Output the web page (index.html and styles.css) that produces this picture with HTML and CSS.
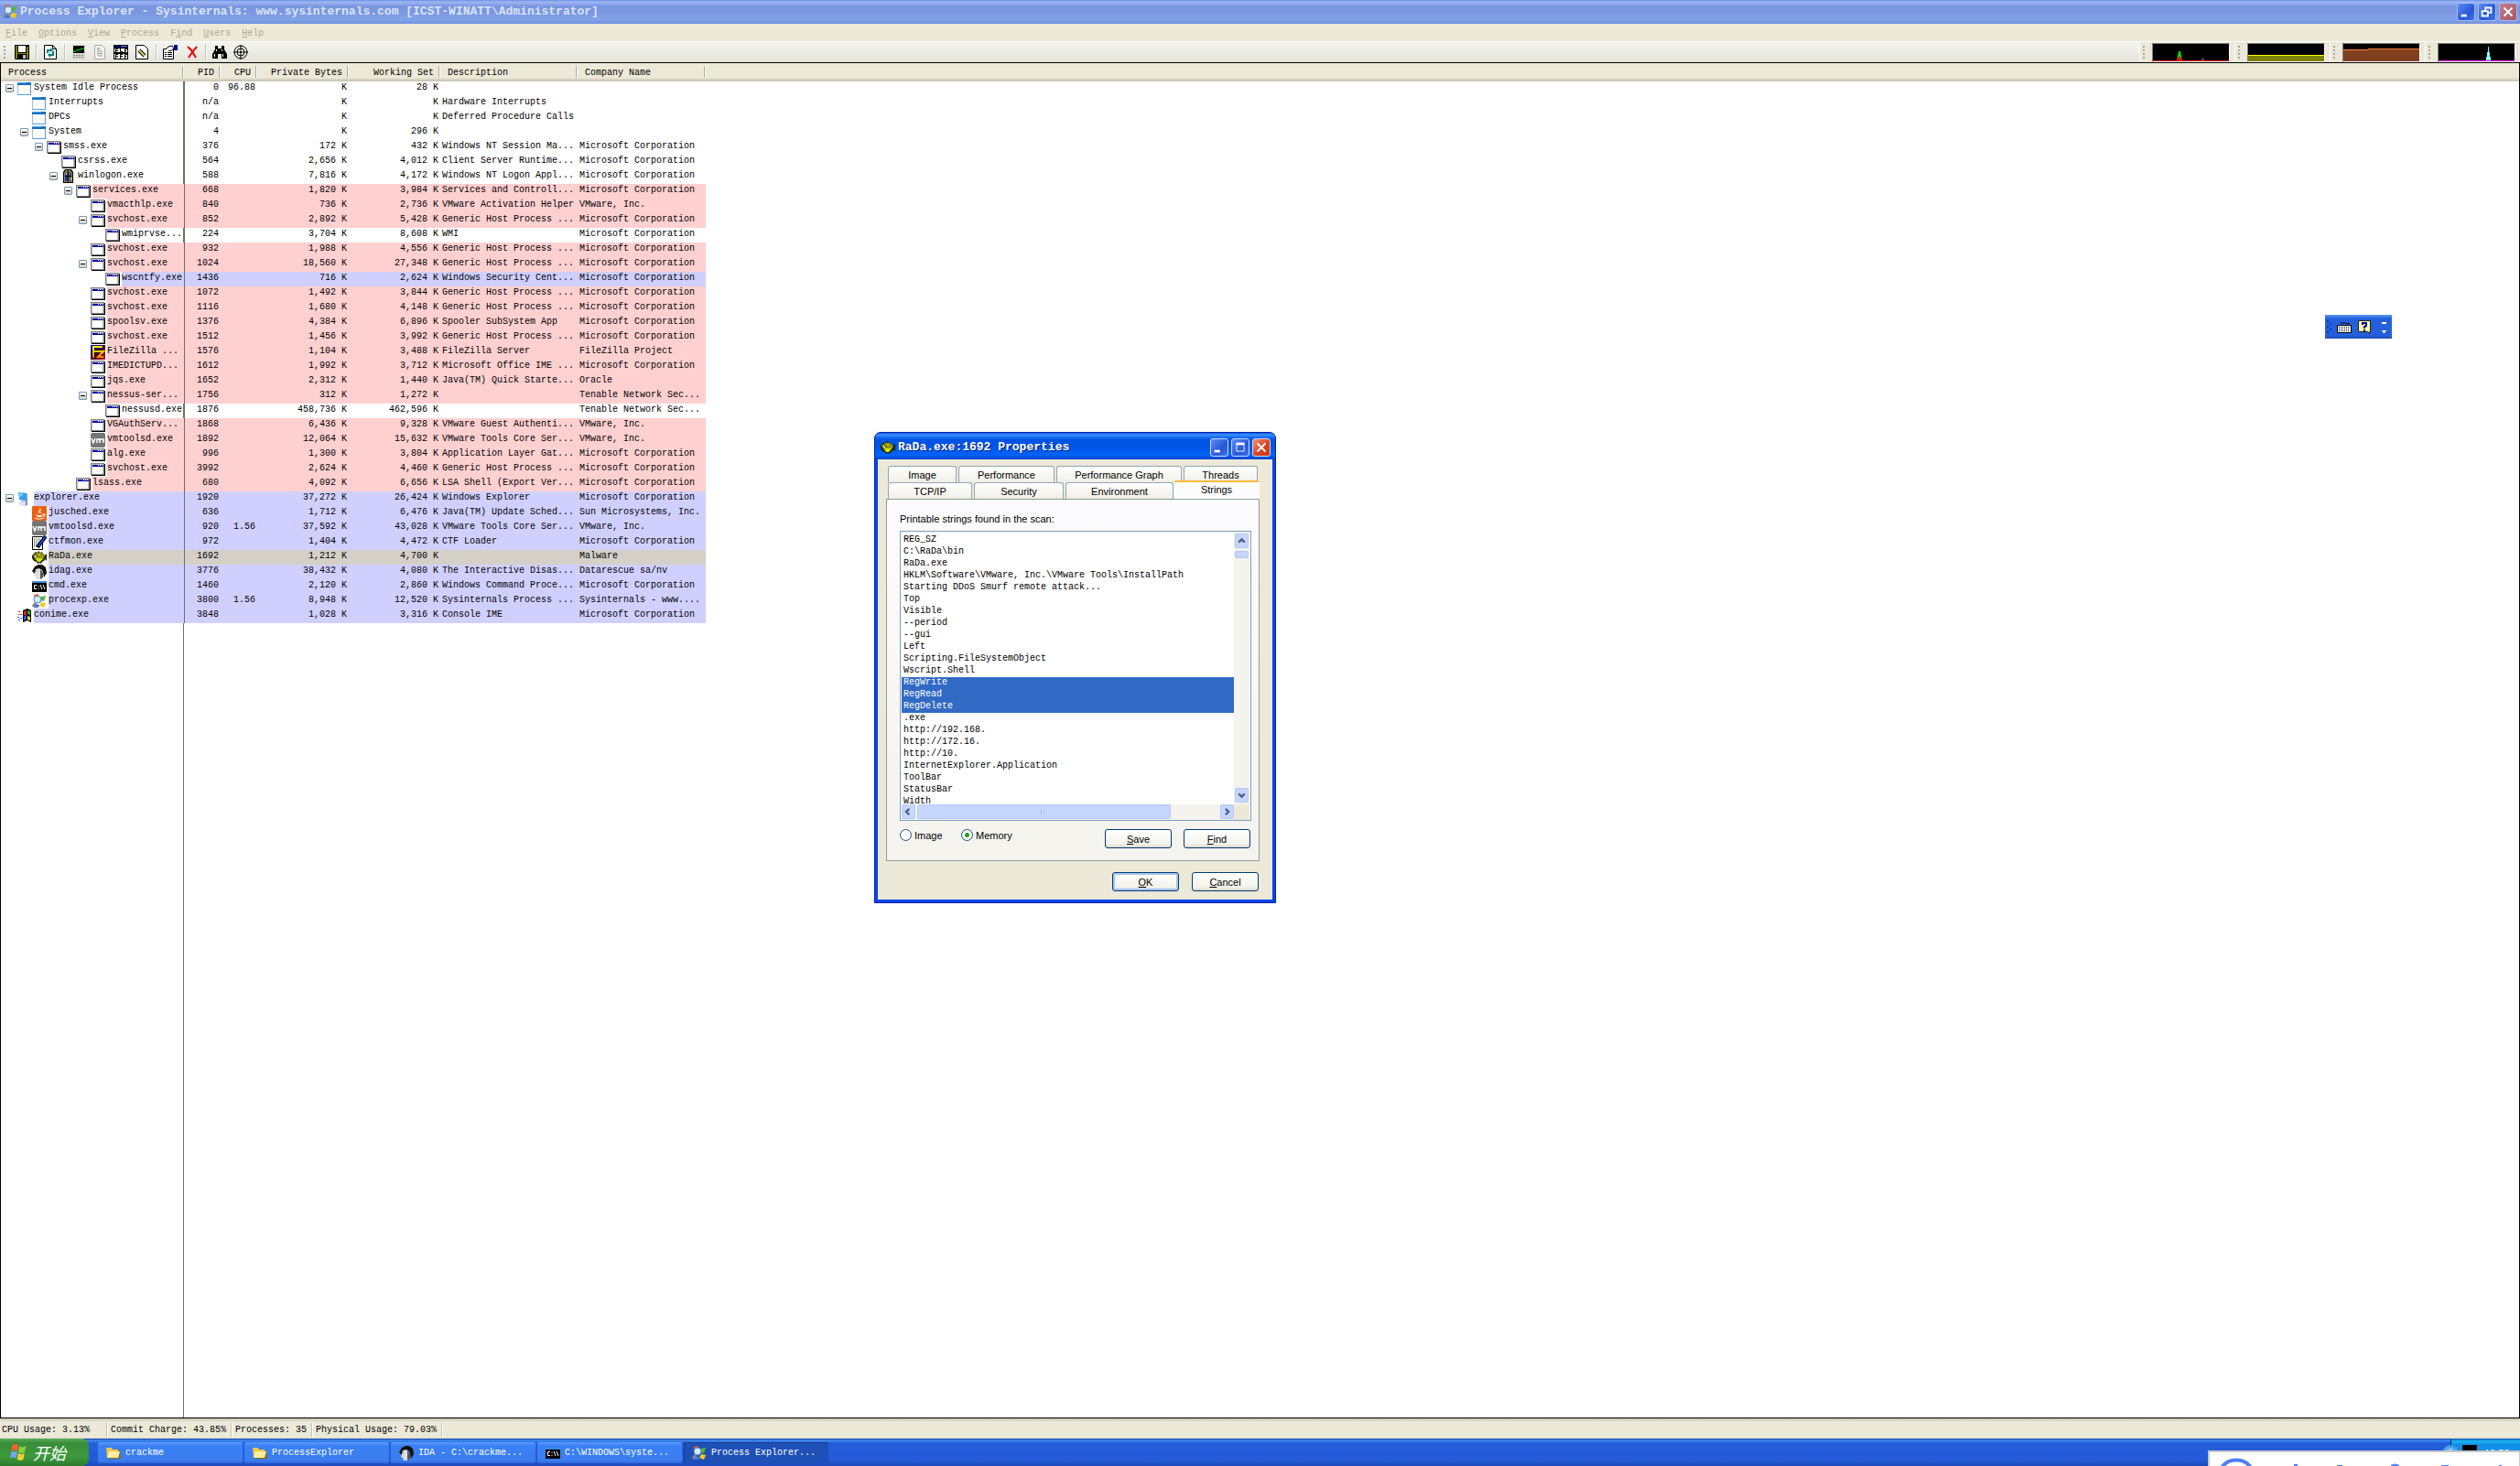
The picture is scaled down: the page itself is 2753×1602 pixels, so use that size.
FILE: index.html
```html
<!DOCTYPE html>
<html lang="en">
<head>
<meta charset="utf-8">
<title>Process Explorer - Sysinternals</title>
<link rel="stylesheet" href="styles.css">
</head>
<body>
<svg class="defs" aria-hidden="true">
  <linearGradient id="fzbg" x1="0" y1="0" x2="1" y2="1"><stop offset="0" stop-color="#0008d8"/><stop offset=".5" stop-color="#300030"/><stop offset="1" stop-color="#c02020"/></linearGradient>
  <linearGradient id="fzfg" x1="0" y1="0" x2="0" y2="1"><stop offset="0" stop-color="#ffff00"/><stop offset="1" stop-color="#ff8000"/></linearGradient>
  <symbol id="idle" viewBox="0 0 16 16"><path fill="#1a6fc4" d="M0 1h15v3H0z"/><path fill="#4aa0f0" d="M0 1h10v1H0z"/><path fill="#fdfdf8" d="M1 4h13v10H1z"/><path fill="#9cc4ec" d="M0 4h1v11H0z"/><path fill="#5a9ade" d="M14 4h1v11H0v-1h14z"/></symbol>
  <symbol id="win" viewBox="0 0 16 16"><path fill="#000" d="M1 2h15v13H1z"/><path fill="#808080" d="M0 1h15v13H0z"/><path fill="#c0c0c0" d="M1 2h13v11H1z"/><path fill="#fff" d="M2 5h11v8H2z"/><path fill="#0000a8" d="M2 3h12v2H2z"/><path fill="#fff" d="M8 3h1v1H8zM10 3h1v1h-1zM12 3h1v1h-1z"/></symbol>
  <symbol id="logon" viewBox="0 0 16 16"><path fill="#000" d="M4 0h7l2 3v12H2V3z"/><path fill="#a09020" d="M3 14V4l2-3h5l2 3v10z"/><path fill="#1838c0" d="M4 13V5l3-3v11zM9 2l2 3v8H9z"/><path fill="#000" d="M7 1h1v14H7zM4 7h7v1H4z"/><path fill="#ffe030" d="M5 4h1v2H5zM10 9h1v3h-1z"/></symbol>
  <symbol id="fz" viewBox="0 0 16 16"><path fill="url(#fzbg)" d="M0 0h16v16H0z"/><path fill="none" stroke="url(#fzfg)" stroke-width="2" d="M3 14V2h10M3 7h5M8 7h6L8 13h6"/></symbol>
  <symbol id="vm" viewBox="0 0 16 16"><rect width="16" height="16" rx="2" fill="#757575"/><path fill="none" stroke="#fff" stroke-width="1.5" d="M1 6l2 5 2-5M7 11V7h3v4M10 7h4v4"/></symbol>
  <symbol id="pc" viewBox="0 0 16 16"><path fill="#c4cce8" d="M6 1l5 1v9l-3 4-5-1 1-3z"/><path fill="#2ba2f4" d="M1 1l8 1v8L2 9z"/><path fill="#78d0ff" d="M2 2l5 1-5 4z"/><path fill="#8890c8" d="M9 2l2 1v12l-3 1 1-5z"/><ellipse cx="5" cy="13.500" rx="4" ry="2" fill="#dce0f4"/></symbol>
  <symbol id="java" viewBox="0 0 16 16"><rect width="16" height="16" rx="1" fill="#e86010"/><path fill="none" stroke="#fff" d="M8 2c3 2-3 3 0 6M10 4c-2 1-1 2 0 4M4 9c1 2 7 2 8 0M5 11c1 1 5 1 6 0M3 13c3 2 8 1 10 0M12 9h2v2h-2"/></symbol>
  <symbol id="ctf" viewBox="0 0 16 16"><path fill="#fff" stroke="#000" d="M.5 1.500h11v14H.5z"/><path stroke="#222" stroke-dasharray="1 1" d="M2 4h8M2 6h8M2 8h6M2 10h5M2 12h3"/><path stroke="#000" stroke-width="4" d="M6 13l9-12"/><path stroke="#1848e0" stroke-width="2" d="M7 12l8-11"/></symbol>
  <symbol id="fish" viewBox="0 0 16 16"><path fill="#202800" d="M2 4l2-2 2 1 1-2 2 2 2-1 1 2 2 2 2-2v8l-2-2-1 2-2 1-1 2-2-1-2 1-1-2-3-1-2-3V6z"/><path fill="#8c8c10" d="M1 6l4-3h6l3 4-3 4H4z"/><path fill="#d8e800" d="M4 9h8l-3 4H6z"/><path fill="#c0c040" d="M7 4h2v2H7zM11 6h1v2h-1zM9 7h1v1H9z"/><path fill="#fff" d="M3 6h2v2H3z"/><path fill="#000" d="M4 6h1v1H4z"/></symbol>
  <symbol id="ida" viewBox="0 0 16 16"><path fill="#111" d="M3 2l4-2h4l4 3 1 6-3 5-1-6-2-3-4 1-3 4-3-3z"/><path fill="#ddd" d="M4 5l4-1 3 3 1 6-3 3H5l-1-3-2-1 1-3z"/><path fill="#555" d="M9 5l3 4v5l-3 2zM3 8l2-1v1H3z"/></symbol>
  <symbol id="cmd" viewBox="0 0 16 16"><path fill="#000" d="M0 2h16v12H0z"/><path fill="#3c88e0" d="M0 2h16v2H0z"/><path fill="none" stroke="#fff" d="M5 6.500H2.500v4H5M7 7v1M7 10v1M9 6l2 5M12 6l2 5"/></symbol>
  <symbol id="pe" viewBox="0 0 16 16"><path fill="#f06020" d="M2 1l5-1v5H3z"/><path fill="#58b828" d="M10 3l5-1-2 6-4-1z"/><path fill="#f8c820" d="M10 9l5 1-2 5-5-2z"/><path stroke="#888" stroke-width="3" d="M1 14l3-4"/><circle cx="6" cy="6" r="4" fill="#d8ecff" stroke="#4888d8"/><path fill="#4878d8" d="M4 11l4 1-1 3-5 0z"/></symbol>
  <symbol id="flag" viewBox="0 0 16 16"><path fill="#000" d="M6 2l5-2 4 2v13l-4-2-5 2z"/><path fill="#e02020" d="M7 3l3-1v5H7zM1 3h2v1H1zM3 6h2v1H3zM1 6h1v1H1z"/><path fill="#20b820" d="M11 2l3 1v4l-3-1z"/><path fill="#3050f0" d="M7 8l3-1v5l-3 1zM0 9h2v1H0zM3 10h2v1H3zM1 12h2v1H1z"/><path fill="#f0e020" d="M11 8l3 1v4l-3-1z"/></symbol>
  <symbol id="folder" viewBox="0 0 16 16"><path fill="#8a6a10" d="M2 3h5l1 2h7l1 9H2z"/><path fill="#f0c84c" d="M0 2h6l1 2h6v9H1z"/><path fill="#fff0a0" d="M3 6h12l-2 7H1z"/></symbol>
</svg>

<header class="titlebar">
  <svg class="icon"><use href="#pe"/></svg>
  <h1>Process Explorer - Sysinternals: www.sysinternals.com [ICST-WINATT\Administrator]</h1>
  <div class="caption-buttons">
    <button class="cap" aria-label="Minimize"><svg viewBox="0 0 20 20"><path fill="#fff" d="M4 13h7v3H4z"/></svg></button>
    <button class="cap" aria-label="Restore"><svg viewBox="0 0 20 20"><path fill="none" stroke="#fff" stroke-width="2" d="M4 9h7v6H4zM8 8V5h7v6h-3"/></svg></button>
    <button class="cap close" aria-label="Close"><svg viewBox="0 0 20 20"><path stroke="#fff" stroke-width="2" d="M5 5l10 10M15 5L5 15"/></svg></button>
  </div>
</header>

<nav class="menubar">
  <button><u>F</u>ile</button><button><u>O</u>ptions</button><button><u>V</u>iew</button><button><u>P</u>rocess</button><button>F<u>i</u>nd</button><button><u>U</u>sers</button><button><u>H</u>elp</button>
</nav>

<div class="toolbar">
  <span class="grip"></span>
  <button aria-label="Save"><svg viewBox="0 0 16 16"><path fill="#000" d="M0 0h16v16H1L0 15z"/><path fill="#808000" d="M1 1h2v8h10V2h2v13H1z"/><path fill="#fff" d="M4 1h8v7H4z"/><path fill="#000" d="M3 10h10v6H3z"/><path fill="#c0c0c0" d="M9 11h3v4H9z"/></svg></button>
  <span class="sep"></span>
  <button aria-label="Refresh"><svg viewBox="0 0 16 16"><path fill="#fff" stroke="#000" d="M1.500.5h9l4 4v11h-13zM10.500.5v4h4"/><path fill="none" stroke="#008080" stroke-width="2" d="M5 9V6h4M11 7v4H7"/><path fill="#008080" d="M8 3l3 3-3 2zM8 9v5l-3-3z"/></svg></button>
  <span class="sep"></span>
  <button aria-label="System Information"><svg viewBox="0 0 16 16"><path fill="#d8d8d0" d="M1 0h14v16H1z"/><path fill="#000" d="M2 1h12v8H2z"/><path fill="none" stroke="#00ff00" stroke-width="1" d="M2 7h3l2-2 2 1 2-2h3"/><path stroke="#888" stroke-dasharray="2 1" d="M2 11.500h12M2 13.500h12"/></svg></button>
  <button aria-label="Process Tree"><svg viewBox="0 0 16 16"><path fill="#f4f4f0" stroke="#aaa" d="M2.500.5h8l3 3v12h-11z"/><path fill="none" stroke="#999" d="M5 4h4M6 4v8M7 7h4M7 9.500h4M7 12h4"/></svg></button>
  <button aria-label="Lower Pane"><svg viewBox="0 0 16 16"><path fill="#000" d="M0 0h16v16H0z"/><path fill="#fff" d="M1 4h14v4H1zM1 10h14v5H1z"/><path fill="#00007b" d="M1 1h14v2H1z"/><path fill="#fff" d="M9 1h1v1H9zM11 1h1v1h-1zM13 1h1v1h-1z"/><path fill="none" stroke="#000" d="M2.500 8V4.500H5M3 6.500h2M7.500 4v3.500H10M12.500 8V4.500H15M12 6.500h2M2.500 15v-4.500H5M3 12.500h2M7.500 15v-4.500H10M8 12.500h2M12.500 15v-4.500H15M12 12.500h2"/></svg></button>
  <button aria-label="DLL View"><svg viewBox="0 0 16 16"><path fill="#fff" stroke="#000" d="M1.500.5h9l4 4v11h-13z"/><path stroke="#000" stroke-width="4" d="M5 6l6 6"/><path stroke="#d8d860" stroke-width="2" d="M5 6l6 6"/></svg></button>
  <span class="sep"></span>
  <button aria-label="Properties"><svg viewBox="0 0 16 16"><path fill="#fff" stroke="#000" d="M.5 4.500h11v11H.5z"/><path stroke="#000" d="M2 8.500h2M5 8.500h5M2 10.500h2M5 10.500h5M2 12.500h2M5 12.500h5"/><path fill="#fff" stroke="#000" d="M3 5l3-3 4-1 2 3-4 3-2-1"/><path fill="#0000a0" d="M12 0h4v6h-4z"/></svg></button>
  <button aria-label="Kill Process"><svg viewBox="0 0 16 16"><path fill="none" stroke="#f00000" stroke-width="2" d="M4 2l4 4 5 8M14 2L9 8l-4 6"/></svg></button>
  <span class="sep"></span>
  <button aria-label="Find Handle"><svg viewBox="0 0 16 16"><path fill="#000" d="M3 1h3v3h4V1h3v4l3 5v5h-6v-5H6v5H0v-5l3-5z"/><path fill="#fff" d="M2 10h1v3H2zM11 10h1v3h-1zM4 5h1v2H4zM10 5h1v2h-1z"/></svg></button>
  <button aria-label="Find Window"><svg viewBox="0 0 16 16"><circle cx="8" cy="8" r="7" fill="none" stroke="#000"/><circle cx="8" cy="8" r="4" fill="none" stroke="#000"/><path stroke="#000" stroke-width="1" d="M8 0v6M8 10v6M0 8h6M10 8h6"/><circle cx="8" cy="8" r="1.500"/></svg></button>
  <div class="graphs">
    <div class="graph"><span class="grip"></span><svg viewBox="0 0 83 19"><path fill="#00e000" d="M26 18l2-10h2l2 10zM53 18l1-2h1l1 2z"/><path fill="#f00000" d="M26 18l2-4h2l2 4zM0 18h83v1H0zM53 17h3v1h-3z"/></svg></div>
    <div class="graph"><span class="grip"></span><svg viewBox="0 0 83 19"><path fill="#808000" d="M0 13h83v6H0z"/><path fill="#ffff00" d="M0 12h83v1H0z"/></svg></div>
    <div class="graph"><span class="grip"></span><svg viewBox="0 0 83 19"><path fill="#804020" d="M0 6h27V5h56v14H0z"/><path fill="#ff8040" d="M0 6h27V5h56v1H27v1H0z"/></svg></div>
    <div class="graph"><span class="grip"></span><svg viewBox="0 0 83 19"><path fill="#80ffff" d="M52 18v-4h1V9h1V3h1v6h1v5h1v4z"/><path fill="#ff00ff" d="M0 18h83v1H0z"/></svg></div>
  </div>
</div>

<main class="list">
<table>
<colgroup><col class="c-proc"><col class="c-sm"><col class="c-sm"><col class="c-md"><col class="c-md"><col class="c-desc"><col class="c-co"><col></colgroup>
<thead><tr><th class="t">Process</th><th>PID</th><th>CPU</th><th>Private Bytes</th><th>Working Set</th><th class="t">Description</th><th class="t">Company Name</th><td></td></tr></thead>
<tbody>
<tr><th><div class="node l0"><button aria-label="Collapse"></button><svg><use href="#idle"/></svg><span>System Idle Process</span></div></th><td>0</td><td>96.88</td><td>K</td><td>28 K</td><td></td><td></td></tr>
<tr><th><div class="node l1"><svg><use href="#idle"/></svg><span>Interrupts</span></div></th><td>n/a</td><td></td><td>K</td><td>K</td><td>Hardware Interrupts</td><td></td></tr>
<tr><th><div class="node l1"><svg><use href="#idle"/></svg><span>DPCs</span></div></th><td>n/a</td><td></td><td>K</td><td>K</td><td>Deferred Procedure Calls</td><td></td></tr>
<tr><th><div class="node l1"><button aria-label="Collapse"></button><svg><use href="#idle"/></svg><span>System</span></div></th><td>4</td><td></td><td>K</td><td>296 K</td><td></td><td></td></tr>
<tr><th><div class="node l2"><button aria-label="Collapse"></button><svg><use href="#win"/></svg><span>smss.exe</span></div></th><td>376</td><td></td><td>172 K</td><td>432 K</td><td>Windows NT Session Ma...</td><td>Microsoft Corporation</td></tr>
<tr><th><div class="node l3"><svg><use href="#win"/></svg><span>csrss.exe</span></div></th><td>564</td><td></td><td>2,656 K</td><td>4,012 K</td><td>Client Server Runtime...</td><td>Microsoft Corporation</td></tr>
<tr><th><div class="node l3"><button aria-label="Collapse"></button><svg><use href="#logon"/></svg><span>winlogon.exe</span></div></th><td>588</td><td></td><td>7,816 K</td><td>4,172 K</td><td>Windows NT Logon Appl...</td><td>Microsoft Corporation</td></tr>
<tr class="svc"><th><div class="node l4"><button aria-label="Collapse"></button><svg><use href="#win"/></svg><span>services.exe</span></div></th><td>668</td><td></td><td>1,820 K</td><td>3,984 K</td><td>Services and Controll...</td><td>Microsoft Corporation</td></tr>
<tr class="svc"><th><div class="node l5"><svg><use href="#win"/></svg><span>vmacthlp.exe</span></div></th><td>840</td><td></td><td>736 K</td><td>2,736 K</td><td>VMware Activation Helper</td><td>VMware, Inc.</td></tr>
<tr class="svc"><th><div class="node l5"><button aria-label="Collapse"></button><svg><use href="#win"/></svg><span>svchost.exe</span></div></th><td>852</td><td></td><td>2,892 K</td><td>5,428 K</td><td>Generic Host Process ...</td><td>Microsoft Corporation</td></tr>
<tr><th><div class="node l6"><svg><use href="#win"/></svg><span>wmiprvse...</span></div></th><td>224</td><td></td><td>3,704 K</td><td>8,608 K</td><td>WMI</td><td>Microsoft Corporation</td></tr>
<tr class="svc"><th><div class="node l5"><svg><use href="#win"/></svg><span>svchost.exe</span></div></th><td>932</td><td></td><td>1,988 K</td><td>4,556 K</td><td>Generic Host Process ...</td><td>Microsoft Corporation</td></tr>
<tr class="svc"><th><div class="node l5"><button aria-label="Collapse"></button><svg><use href="#win"/></svg><span>svchost.exe</span></div></th><td>1024</td><td></td><td>18,560 K</td><td>27,348 K</td><td>Generic Host Process ...</td><td>Microsoft Corporation</td></tr>
<tr class="own"><th><div class="node l6"><svg><use href="#win"/></svg><span>wscntfy.exe</span></div></th><td>1436</td><td></td><td>716 K</td><td>2,624 K</td><td>Windows Security Cent...</td><td>Microsoft Corporation</td></tr>
<tr class="svc"><th><div class="node l5"><svg><use href="#win"/></svg><span>svchost.exe</span></div></th><td>1072</td><td></td><td>1,492 K</td><td>3,844 K</td><td>Generic Host Process ...</td><td>Microsoft Corporation</td></tr>
<tr class="svc"><th><div class="node l5"><svg><use href="#win"/></svg><span>svchost.exe</span></div></th><td>1116</td><td></td><td>1,680 K</td><td>4,148 K</td><td>Generic Host Process ...</td><td>Microsoft Corporation</td></tr>
<tr class="svc"><th><div class="node l5"><svg><use href="#win"/></svg><span>spoolsv.exe</span></div></th><td>1376</td><td></td><td>4,384 K</td><td>6,896 K</td><td>Spooler SubSystem App</td><td>Microsoft Corporation</td></tr>
<tr class="svc"><th><div class="node l5"><svg><use href="#win"/></svg><span>svchost.exe</span></div></th><td>1512</td><td></td><td>1,456 K</td><td>3,992 K</td><td>Generic Host Process ...</td><td>Microsoft Corporation</td></tr>
<tr class="svc"><th><div class="node l5"><svg><use href="#fz"/></svg><span>FileZilla ...</span></div></th><td>1576</td><td></td><td>1,104 K</td><td>3,488 K</td><td>FileZilla Server</td><td>FileZilla Project</td></tr>
<tr class="svc"><th><div class="node l5"><svg><use href="#win"/></svg><span>IMEDICTUPD...</span></div></th><td>1612</td><td></td><td>1,992 K</td><td>3,712 K</td><td>Microsoft Office IME ...</td><td>Microsoft Corporation</td></tr>
<tr class="svc"><th><div class="node l5"><svg><use href="#win"/></svg><span>jqs.exe</span></div></th><td>1652</td><td></td><td>2,312 K</td><td>1,440 K</td><td>Java(TM) Quick Starte...</td><td>Oracle</td></tr>
<tr class="svc"><th><div class="node l5"><button aria-label="Collapse"></button><svg><use href="#win"/></svg><span>nessus-ser...</span></div></th><td>1756</td><td></td><td>312 K</td><td>1,272 K</td><td></td><td>Tenable Network Sec...</td></tr>
<tr><th><div class="node l6"><svg><use href="#win"/></svg><span>nessusd.exe</span></div></th><td>1876</td><td></td><td>458,736 K</td><td>462,596 K</td><td></td><td>Tenable Network Sec...</td></tr>
<tr class="svc"><th><div class="node l5"><svg><use href="#win"/></svg><span>VGAuthServ...</span></div></th><td>1868</td><td></td><td>6,436 K</td><td>9,328 K</td><td>VMware Guest Authenti...</td><td>VMware, Inc.</td></tr>
<tr class="svc"><th><div class="node l5"><svg><use href="#vm"/></svg><span>vmtoolsd.exe</span></div></th><td>1892</td><td></td><td>12,064 K</td><td>15,632 K</td><td>VMware Tools Core Ser...</td><td>VMware, Inc.</td></tr>
<tr class="svc"><th><div class="node l5"><svg><use href="#win"/></svg><span>alg.exe</span></div></th><td>996</td><td></td><td>1,300 K</td><td>3,804 K</td><td>Application Layer Gat...</td><td>Microsoft Corporation</td></tr>
<tr class="svc"><th><div class="node l5"><svg><use href="#win"/></svg><span>svchost.exe</span></div></th><td>3992</td><td></td><td>2,624 K</td><td>4,460 K</td><td>Generic Host Process ...</td><td>Microsoft Corporation</td></tr>
<tr class="svc"><th><div class="node l4"><svg><use href="#win"/></svg><span>lsass.exe</span></div></th><td>680</td><td></td><td>4,092 K</td><td>6,656 K</td><td>LSA Shell (Export Ver...</td><td>Microsoft Corporation</td></tr>
<tr class="own"><th><div class="node l0"><button aria-label="Collapse"></button><svg><use href="#pc"/></svg><span>explorer.exe</span></div></th><td>1920</td><td></td><td>37,272 K</td><td>26,424 K</td><td>Windows Explorer</td><td>Microsoft Corporation</td></tr>
<tr class="own"><th><div class="node l1"><svg><use href="#java"/></svg><span>jusched.exe</span></div></th><td>636</td><td></td><td>1,712 K</td><td>6,476 K</td><td>Java(TM) Update Sched...</td><td>Sun Microsystems, Inc.</td></tr>
<tr class="own"><th><div class="node l1"><svg><use href="#vm"/></svg><span>vmtoolsd.exe</span></div></th><td>920</td><td>1.56</td><td>37,592 K</td><td>43,028 K</td><td>VMware Tools Core Ser...</td><td>VMware, Inc.</td></tr>
<tr class="own"><th><div class="node l1"><svg><use href="#ctf"/></svg><span>ctfmon.exe</span></div></th><td>972</td><td></td><td>1,404 K</td><td>4,472 K</td><td>CTF Loader</td><td>Microsoft Corporation</td></tr>
<tr class="sel"><th><div class="node l1"><svg><use href="#fish"/></svg><span>RaDa.exe</span></div></th><td>1692</td><td></td><td>1,212 K</td><td>4,700 K</td><td></td><td>Malware</td></tr>
<tr class="own"><th><div class="node l1"><svg><use href="#ida"/></svg><span>idag.exe</span></div></th><td>3776</td><td></td><td>38,432 K</td><td>4,080 K</td><td>The Interactive Disas...</td><td>Datarescue sa/nv</td></tr>
<tr class="own"><th><div class="node l1"><svg><use href="#cmd"/></svg><span>cmd.exe</span></div></th><td>1460</td><td></td><td>2,120 K</td><td>2,860 K</td><td>Windows Command Proce...</td><td>Microsoft Corporation</td></tr>
<tr class="own"><th><div class="node l1"><svg><use href="#pe"/></svg><span>procexp.exe</span></div></th><td>3800</td><td>1.56</td><td>8,948 K</td><td>12,520 K</td><td>Sysinternals Process ...</td><td>Sysinternals - www....</td></tr>
<tr class="own"><th><div class="node l0"><svg><use href="#flag"/></svg><span>conime.exe</span></div></th><td>3848</td><td></td><td>1,028 K</td><td>3,316 K</td><td>Console IME</td><td>Microsoft Corporation</td></tr>
</tbody>
</table>
</main>

<footer class="status">
  <span class="s1">CPU Usage: 3.13%</span><span class="s2">Commit Charge: 43.85%</span><span class="s3">Processes: 35</span><span class="s4">Physical Usage: 79.03%</span>
</footer>

<nav class="taskbar">
  <button class="start" lang="zh"><svg viewBox="0 0 18 18"><path fill="#f06030" d="M3 2q3-2 6 0L8 8Q5 6 2 8z"/><path fill="#88d038" d="M10 3q3 2 7 0l-2 6q-3 2-6 0z"/><path fill="#70a8f8" d="M2 9q3-2 6 0l-1 6q-3-2-6 0z"/><path fill="#f8d030" d="M9 10q3 2 6 0l-1 6q-3 2-6 0z"/></svg>开始</button>
  <div class="tasks">
    <button><svg class="icon"><use href="#folder"/></svg>crackme</button>
    <button><svg class="icon"><use href="#folder"/></svg>ProcessExplorer</button>
    <button><svg class="icon"><use href="#ida"/></svg>IDA - C:\crackme...</button>
    <button><svg class="icon"><use href="#cmd"/></svg>C:\WINDOWS\syste...</button>
    <button class="active"><svg class="icon"><use href="#pe"/></svg>Process Explorer...</button>
  </div>
  <div class="tray"><span class="chev">‹</span><span class="blk"></span><time>10:58</time></div>
</nav>

<div class="toast"><svg viewBox="0 0 339 16"><path fill="none" stroke="#4e7ff8" stroke-width="4" d="M12 18A20 20 0 0 1 46 18"/><path fill="#4e7ff8" d="M92 13h4v3h-4zM139 14h6v2h-6zM198 14q4-3 9 0v2h-9zM253 14h8v2h-8zM316 14h3v2h-3z"/></svg></div>

<div class="langbar">
  <svg viewBox="0 0 73 26"><path fill="#0c3cae" d="M2 6h2v2H2zM5 9h2v2H5zM2 12h2v2H2zM5 15h2v2H5zM2 18h2v2H2z"/><path fill="#fff" stroke="#000" d="M13.500 11.500h15v8h-15z"/><path stroke="#000" stroke-dasharray="1 1" d="M15 13.500h12M15 15.500h12M15 17.500h12"/><path fill="none" stroke="#000" d="M17 8l2 2 2-2 2 2 3-1v2"/><path fill="#ffffa0" stroke="#222" d="M36.500 6.500h13v12h-1v2l-2-2h-10z"/><path fill="none" stroke="#0000a0" stroke-width="2" d="M41 11V9h4v3l-2 1v2M43 16v2"/><path fill="#fff" d="M62 8h5v2h-5zM62 17h5l-2 3h-1z"/></svg>
</div>

<section class="dialog" role="dialog" aria-label="RaDa.exe:1692 Properties">
  <div class="dlg-title">
    <svg class="icon"><use href="#fish"/></svg>
    <h2>RaDa.exe:1692 Properties</h2>
    <div class="caption-buttons">
      <button class="cap" aria-label="Minimize"><svg viewBox="0 0 20 20"><path fill="#fff" d="M4 13h7v3H4z"/></svg></button>
      <button class="cap" aria-label="Maximize"><svg viewBox="0 0 20 20"><path fill="none" stroke="#fff" d="M5.500 5.500h9v9h-9z"/><path fill="#fff" d="M5 4h10v3H5z"/></svg></button>
      <button class="cap close" aria-label="Close"><svg viewBox="0 0 20 20"><path stroke="#fff" stroke-width="2" d="M5 5l10 10M15 5L5 15"/></svg></button>
    </div>
  </div>
  <div class="dlg-body">
    <div class="tabs r1"><button>Image</button><button>Performance</button><button>Performance Graph</button><button>Threads</button></div>
    <div class="tabs r2"><button>TCP/IP</button><button>Security</button><button>Environment</button><button class="on">Strings</button></div>
    <div class="panel">
      <label for="strings">Printable strings found in the scan:</label>
      <div class="box">
        <select id="strings" multiple size="22">
          <option>REG_SZ</option><option>C:\RaDa\bin</option><option>RaDa.exe</option><option>HKLM\Software\VMware, Inc.\VMware Tools\InstallPath</option><option>Starting DDoS Smurf remote attack...</option><option>Top</option><option>Visible</option><option>--period</option><option>--gui</option><option>Left</option><option>Scripting.FileSystemObject</option><option>Wscript.Shell</option><option selected>RegWrite</option><option selected>RegRead</option><option selected>RegDelete</option><option>.exe</option><option>http://192.168.</option><option>http://172.16.</option><option>http://10.</option><option>InternetExplorer.Application</option><option>ToolBar</option><option>StatusBar</option><option>Width</option>
        </select>
        <div class="vs"><button aria-label="Scroll up"><svg viewBox="0 0 16 16"><path fill="none" stroke="#4d6185" stroke-width="3" d="M4 10l4-4 4 4"/></svg></button><span class="thumb"></span><button class="end" aria-label="Scroll down"><svg viewBox="0 0 16 16"><path fill="none" stroke="#4d6185" stroke-width="3" d="M4 6l4 4 4-4"/></svg></button></div>
        <div class="hs"><button aria-label="Scroll left"><svg viewBox="0 0 16 16"><path fill="none" stroke="#4d6185" stroke-width="3" d="M9 4L5 8l4 4"/></svg></button><span class="thumb"><i></i></span><button class="end" aria-label="Scroll right"><svg viewBox="0 0 16 16"><path fill="none" stroke="#4d6185" stroke-width="3" d="M6 4l4 4-4 4"/></svg></button></div>
        <span class="corner"></span>
      </div>
      <div class="actions">
        <label class="radio"><input type="radio" name="src">Image</label>
        <label class="radio"><input type="radio" name="src" checked>Memory</label>
        <div class="pair"><button class="btn"><u>S</u>ave</button><button class="btn"><u>F</u>ind</button></div>
      </div>
    </div>
    <div class="foot"><button class="btn default"><u>O</u>K</button><button class="btn"><u>C</u>ancel</button></div>
  </div>
</section>
</body>
</html>
```
FILE: styles.css
```css
* { box-sizing: border-box; }
body {
  margin: 0;
  min-height: 100vh;
  display: flex;
  flex-direction: column;
  position: relative;
  overflow: hidden;
  background: #fff;
  font: 10px/14px "Liberation Mono", "Noto Sans CJK SC", monospace;
  color: #000;
}
button { font: inherit; color: inherit; background: none; border: 0; padding: 0; margin: 0; }
svg { display: block; }
.defs { position: absolute; width: 0; height: 0; }
.icon { width: 16px; height: 16px; flex: none; }

/* main window caption */
.titlebar {
  height: 26px;
  display: flex;
  align-items: center;
  gap: 3px;
  padding: 0 3px;
  background: linear-gradient(#6a8ce0 0, #9db8f4 2px, #7a96df 7px, #7b97e0 14px, #82a4ea 21px, #7590dc 26px);
}
.titlebar h1, .dlg-title h2 { flex: 1; margin: 0; font: bold 13px/20px "Liberation Mono", monospace; color: #d8e4f8; white-space: nowrap; }
.caption-buttons { display: flex; gap: 3px; }
.cap { width: 20px; height: 20px; border: 1px solid #c8d8ff; border-radius: 3px; background: linear-gradient(135deg, #5c8cf0, #2858d8 60%, #3c74e8); }
.cap svg { width: 18px; height: 18px; }
.titlebar .cap { border-color: #a4bcf8; }
.titlebar .cap.close { background: linear-gradient(135deg, #c08090, #a85460); }

.menubar { height: 19px; display: flex; gap: 12px; padding: 3px 6px 0; background: #ece9d8; color: #aca899; }

/* toolbar */
.toolbar {
  height: 23px;
  display: flex;
  align-items: center;
  gap: 7px;
  padding: 0 0 0 4px;
  background: linear-gradient(#f4f3ee, #eef0ea 30%, #e4e3d8);
  border-top: 1px solid #fff;
}
.toolbar > .grip { margin-right: 3px; }
.toolbar > button { width: 16px; height: 16px; }
.toolbar svg { width: 16px; height: 16px; }
.sep { width: 1px; height: 18px; background: #c5c2b2; box-shadow: 1px 0 #fff; }
.grip { width: 2px; height: 14px; background: repeating-linear-gradient(#a8a698 0 2px, transparent 2px 4px); }
.graphs { margin-left: auto; display: flex; }
.graph { width: 104px; height: 22px; display: flex; align-items: center; gap: 8px; padding-left: 3px; border-left: 1px solid #fff; background: #ebe8d9; }
.toolbar .graph svg { width: 85px; height: 21px; background: #000; border: 1px solid; border-color: #84826f #fff #fff #84826f; }

/* process list */
.list { flex: 1; border: 1px solid #000; background: linear-gradient(#716f64, #716f64) 199px 19px / 1px 100% no-repeat #fff; }
table { width: 100%; table-layout: fixed; border-collapse: collapse; }
.c-proc { width: 200px; }
.c-sm { width: 40px; }
.c-md { width: 100px; }
.c-desc { width: 150px; }
.c-co { width: 140px; }
th, td { padding: 0; font-weight: normal; white-space: nowrap; text-align: right; }
thead th, thead td { height: 20px; padding: 1px 7px 0 8px; background: linear-gradient(#ece9d8 0 16px, #e0ddcc 17px, #d3cfbf 18px, #c8c4b4 20px); vertical-align: middle; }
thead th { background: linear-gradient(#aca899, #aca899) right 1px top 3px / 1px 13px no-repeat, linear-gradient(#fff, #fff) right 0 top 3px / 1px 13px no-repeat, linear-gradient(#ece9d8 0 16px, #e0ddcc 17px, #d3cfbf 18px, #c8c4b4 20px); }
thead .t { text-align: left; }
tbody th { border-right: 1px solid #716f64; }
tbody td { height: 16px; padding: 0 2px 2px; background: var(--row); }
tbody td:nth-child(n + 6) { text-align: left; }
.svc { --row: #ffd0d0; }
.own { --row: #d0d0ff; }
.sel { --row: #d4d0c8; }
.node { height: 16px; display: flex; text-align: left; }
.node svg { width: 16px; height: 16px; flex: none; margin-right: 2px; }
.node span { flex: 1; height: 16px; background: var(--row); }
.node button { width: 9px; height: 9px; margin: 3px 4px 0 -13px; flex: none; border: 1px solid #7898b5; border-radius: 1px; background: linear-gradient(#000, #000) center / 5px 1px no-repeat, linear-gradient(#fff, #d0ccc0); }
.l0 { padding-left: 18px; }
.l1 { padding-left: 34px; }
.l2 { padding-left: 50px; }
.l3 { padding-left: 66px; }
.l4 { padding-left: 82px; }
.l5 { padding-left: 98px; }
.l6 { padding-left: 114px; }

/* status bar */
.status { height: 22px; display: flex; align-items: center; padding-top: 4px; background: linear-gradient(#c8c4b4, #ece9d8 4px, #ece9d8 20px, #e0dccb); }
.status span { height: 16px; line-height: 16px; padding-left: 4px; border-right: 1px solid #c5c2b2; box-shadow: 1px 0 #fff; white-space: nowrap; }
.status .s1 { width: 117px; padding-left: 2px; }
.status .s2 { width: 136px; }
.status .s3 { width: 88px; }
.status .s4 { width: 142px; }

/* taskbar */
.taskbar { height: 30px; display: flex; background: linear-gradient(#1941a5 0, #3f8cf0 2px, #245edb 5px, #2459d8 24px, #1a48b8 30px); color: #fff; }
.start { width: 97px; display: flex; align-items: center; gap: 6px; padding-left: 10px; border-radius: 0 8px 8px 0; background: linear-gradient(#5cae5c, #388e38 5px, #3c9a3c 20px, #2d7a2d); font: italic 18px/28px "Noto Sans CJK SC", sans-serif; }
.start svg { width: 20px; height: 20px; }
.tasks { flex: 1; display: flex; gap: 2px; padding: 4px 0 3px 10px; }
.tasks button { width: 158px; display: flex; align-items: center; gap: 5px; padding-left: 9px; border-radius: 2px; background: linear-gradient(#5a9cf8, #3a80f4 4px, #3a7df0 20px, #2f68d8); white-space: nowrap; }
.tasks .active { background: #1e50b6; box-shadow: inset 1px 1px #153c90; }
.tray { width: 76px; display: flex; gap: 4px; padding-top: 7px; background: linear-gradient(#0c59b9, #1cb8f0 3px, #1290e8 6px); border-left: 1px solid #09357f; }
.chev { width: 18px; height: 18px; margin-left: -10px; border-radius: 50%; background: radial-gradient(#8cd0fc, #1c78d0); text-align: center; }
.blk { width: 16px; height: 16px; background: #000; }
.tray time { padding: 2px 4px 0; font: 11px/14px "Liberation Sans", sans-serif; }
.toast { position: absolute; right: 0; bottom: 0; width: 341px; height: 17px; border: 2px solid #c8c8c8; border-bottom: 0; border-right-width: 1px; background: #fff; overflow: hidden; }
.toast svg { width: 339px; height: 16px; }

.langbar { position: absolute; left: 2540px; top: 344px; width: 73px; height: 26px; background: linear-gradient(#5c9cf4, #2460dc 4px, #2460dc 22px, #1c4cb8); }
.langbar svg { width: 73px; height: 26px; }

/* properties dialog */
.dialog { position: absolute; left: 955px; top: 472px; width: 439px; border: 1px solid #001ea0; border-radius: 7px 7px 0 0; padding: 0 3px 3px; background: #0a46e6; font: 11px/14px "Liberation Sans", Arial, sans-serif; }
.dlg-title { height: 29px; display: flex; align-items: center; gap: 3px; margin: 0 -3px; padding: 2px 5px 0 6px; border-radius: 6px 6px 0 0; background: linear-gradient(#0058e8 0, #3c90ff 2px, #0054e3 7px, #0054e3 14px, #0064fc 24px, #0044cc 29px); }
.dlg-title h2 { color: #fff; text-shadow: 1px 1px #0a2080; }
.dlg-title .cap.close { background: linear-gradient(135deg, #f09070, #d84020 60%, #c83818); }
.dlg-body { padding: 7px 14px 9px 9px; background: #ece9d8; }
.tabs { display: flex; gap: 2px; height: 18px; padding: 0 2px; }
.tabs button { border: 1px solid #91a7b4; border-bottom: 0; border-radius: 3px 3px 0 0; background: linear-gradient(#fff, #f0efe6); }
.r1 button:nth-child(1) { width: 75px; }
.r1 button:nth-child(2) { width: 105px; }
.r1 button:nth-child(3) { width: 137px; }
.r1 button:nth-child(4) { flex: 1; }
.r2 button:nth-child(1) { width: 92px; }
.r2 button:nth-child(2) { width: 98px; }
.r2 button:nth-child(3) { width: 118px; }
.tabs .on { flex: 1; height: 20px; margin: -2px -2px 0; padding-bottom: 2px; border-color: #fcfcfe; border-top: 2px solid #ffb83c; background: #fcfcfe; z-index: 1; }
.panel { border: 1px solid #919b9c; padding: 14px 8px 13px 14px; background: linear-gradient(#fcfcfe, #f4f3ee); }
.panel > label { display: block; height: 20px; line-height: 14px; }
.box { display: grid; grid-template: 298px 17px / 1fr 17px; border: 1px solid #7f9db9; padding: 0 1px; background: #fff; }
select { width: 100%; height: 298px; border: 0; outline: 0; margin: 0; padding: 3px 0 0; overflow: hidden; border-radius: 0; background: #fff; font: 10px/13px "Liberation Mono", monospace; }
option { height: 13px; min-height: 0; padding: 0 2px; line-height: 13px; color: #000; }
option:checked { background: linear-gradient(#316ac5, #316ac5); -webkit-text-fill-color: #fff; }
.vs { display: flex; flex-direction: column; gap: 3px; padding: 2px 1px; background: #f4f3ee; }
.hs { display: flex; gap: 2px; padding-bottom: 1px; background: #f4f3ee; }
.corner { background: #ece9d8; }
.vs button, .hs button, .thumb { border: 1px solid #b4c8f6; border-radius: 2px; background: #c6d6fc; }
.vs button, .hs button { width: 15px; height: 16px; }
.vs svg, .hs svg { width: 13px; height: 14px; }
.vs .thumb { height: 8px; }
.hs .thumb { width: 277px; display: flex; justify-content: center; align-items: center; }
.thumb i { width: 8px; height: 6px; background: repeating-linear-gradient(90deg, #8cb0f8 0 1px, #eef4fe 1px 2px); }
.vs .end { margin-top: auto; }
.hs .end { margin-left: auto; }
.actions { display: flex; padding: 9px 1px 0 0; }
.radio { display: flex; width: 67px; height: 14px; gap: 3px; line-height: 14px; }
input[type="radio"] { appearance: none; width: 13px; height: 13px; margin: 0; border: 1px solid #1d5281; border-radius: 50%; background: #fff; }
input[type="radio"]:checked { background: radial-gradient(#21a121 0 2px, #fff 3px); }
.pair { margin-left: auto; display: flex; gap: 13px; }
.btn { width: 73px; height: 21px; border: 1px solid #003c74; border-radius: 3px; background: linear-gradient(#fff, #f3f2ec 80%, #dcd8cc); }
.btn.default { box-shadow: inset 0 0 0 2px #a8c4f0; }
.foot { display: flex; justify-content: flex-end; gap: 14px; padding: 12px 1px 0 0; }
```
